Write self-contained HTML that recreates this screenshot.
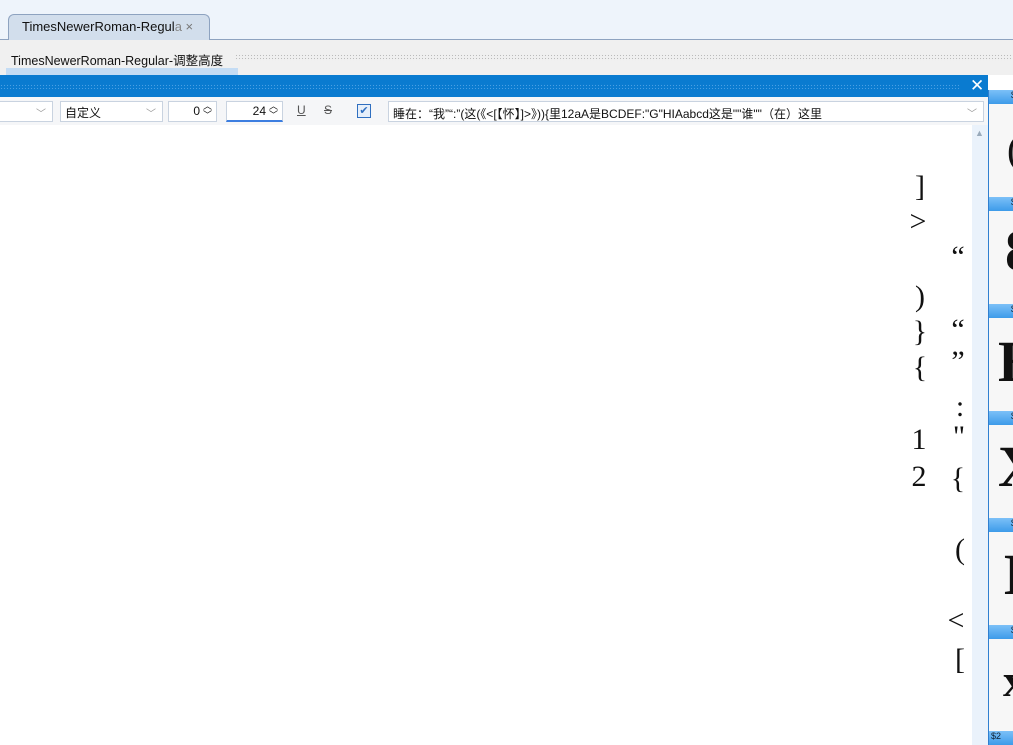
<!DOCTYPE html><html><head><meta charset="utf-8"><style>
*{margin:0;padding:0;box-sizing:border-box}
body{width:1013px;height:745px;overflow:hidden;position:relative;background:#fff;font-family:"Liberation Sans","Noto Sans CJK SC",sans-serif;font-size:12px;color:#111}
.a{position:absolute}
.g{position:absolute;font-family:"Liberation Serif",serif;font-size:30px;line-height:1;color:#111;transform:translateX(-50%)}
.box{position:absolute;top:101px;height:21px;background:#fff;border:1px solid #c9d3e0;padding:2px 4px;font-size:12px}
.chev{position:absolute;right:6px;top:3px;color:#999;font-size:10px}
.hb{position:absolute;left:989px;width:24px;height:14px;background:linear-gradient(#7cc0f8,#3d9be9);font-size:9px;color:#123;padding-left:22px}
.big{position:absolute;left:998px;font-family:"Liberation Serif",serif;font-size:58px;line-height:1;font-weight:bold}
</style></head><body>
<div class="a" style="left:0;top:0;width:1013px;height:40px;background:#eef4fb"></div>
<div class="a" style="left:0;top:39px;width:1013px;height:1px;background:#8ea3c0"></div>
<div class="a" style="left:8px;top:14px;width:202px;height:26px;background:#d2deec;border:1px solid #8ea3c0;border-bottom:none;border-radius:6px 6px 0 0;padding:4px 0 0 13px;font-size:13px">TimesNewerRoman-Regul<span style="color:#888">a</span> <span style="color:#777">×</span></div>
<div class="a" style="left:0;top:40px;width:1013px;height:35px;background:#f0f0f0"></div>
<div class="a" style="left:11px;top:50px;font-size:12.5px">TimesNewerRoman-Regular-调整高度</div>
<div class="a" style="left:235px;top:54px;width:778px;height:7px;background-image:radial-gradient(#bbb 0.6px,transparent 0.8px);background-size:3px 3px"></div>
<div class="a" style="left:6px;top:68px;width:232px;height:7px;background:#c4dcf4"></div>
<div class="a" style="left:0;top:75px;width:988px;height:22px;background:#0a7bd0"></div>
<div class="a" style="left:0;top:84px;width:960px;height:5px;background-image:radial-gradient(#4aa0e4 0.6px,transparent 0.8px);background-size:3px 3px"></div>
<div class="a" style="left:970px;top:76px;color:#fff;font-size:17px">✕</div>
<div class="a" style="left:0;top:97px;width:988px;height:28px;background:#f5f6f8"></div>
<div class="box" style="left:-2px;width:55px"><span class="chev">﹀</span></div>
<div class="box" style="left:60px;width:103px">自定义<span class="chev">﹀</span></div>
<div class="box" style="left:168px;width:49px;text-align:right;padding-right:16px">0<span class="a" style="right:4px;top:0;font-size:9px;line-height:9px">︿<br>﹀</span></div>
<div class="box" style="left:226px;width:57px;text-align:right;padding-right:16px;border-bottom:2px solid #3c7ee0">24<span class="a" style="right:4px;top:0;font-size:9px;line-height:9px">︿<br>﹀</span></div>
<div class="a" style="left:297px;top:103px;text-decoration:underline;color:#555">U</div>
<div class="a" style="left:324px;top:103px;text-decoration:line-through;color:#555">S</div>
<div class="a" style="left:357px;top:104px;width:14px;height:14px;border:1px solid #2f6fc0;background:#e6effa;color:#2f6fc0;font-size:11px;line-height:12px;text-align:center">✔</div>
<div class="box" style="left:388px;width:596px;padding-top:3px">睡在：“我”“:”(这(《<[【怀】]>》)){里12aA是BCDEF:"G"HIAabcd这是""谁""（在）这里<span class="chev">﹀</span></div>
<div class="a" style="left:972px;top:125px;width:16px;height:620px;background:#eaf2fb"></div>
<div class="a" style="left:975px;top:128px;color:#9ab;font-size:9px">▲</div>
<div class="a" style="left:988px;top:90px;width:1px;height:655px;background:#2f7fd0"></div>
<div class="a" style="left:989px;top:90px;width:24px;height:655px;background:#f7f7f7"></div>
<div class="hb" style="top:90px">$</div><div class="hb" style="top:197px">$</div><div class="hb" style="top:304px">$</div><div class="hb" style="top:411px">$</div><div class="hb" style="top:518px">$</div><div class="hb" style="top:625px">$</div><div class="hb" style="top:731px;padding-left:2px">$2</div>
<div class="big" style="top:130px;left:1007px;font-size:40px;font-weight:normal">(</div>
<div class="big" style="top:222px;left:1005px">8</div>
<div class="big" style="top:333px">H</div>
<div class="big" style="top:438px">X</div>
<div class="big" style="top:546px;left:1003px">I</div>
<div class="big" style="top:658px;left:1003px;font-size:46px">x</div>
<div class="g" style="left:920px;top:172px">]</div>
<div class="g" style="left:918px;top:207px">&gt;</div>
<div class="g" style="left:920px;top:282px">)</div>
<div class="g" style="left:920px;top:317px">}</div>
<div class="g" style="left:920px;top:353px">{</div>
<div class="g" style="left:919px;top:425px">1</div>
<div class="g" style="left:919px;top:462px">2</div>
<div class="g" style="left:958px;top:242px">“</div>
<div class="g" style="left:958px;top:315px">“</div>
<div class="g" style="left:958px;top:347px">”</div>
<div class="g" style="left:960px;top:392px">:</div>
<div class="g" style="left:959px;top:422px">"</div>
<div class="g" style="left:958px;top:464px">{</div>
<div class="g" style="left:960px;top:535px">(</div>
<div class="g" style="left:956px;top:606px">&lt;</div>
<div class="g" style="left:960px;top:645px">[</div>
</body></html>
